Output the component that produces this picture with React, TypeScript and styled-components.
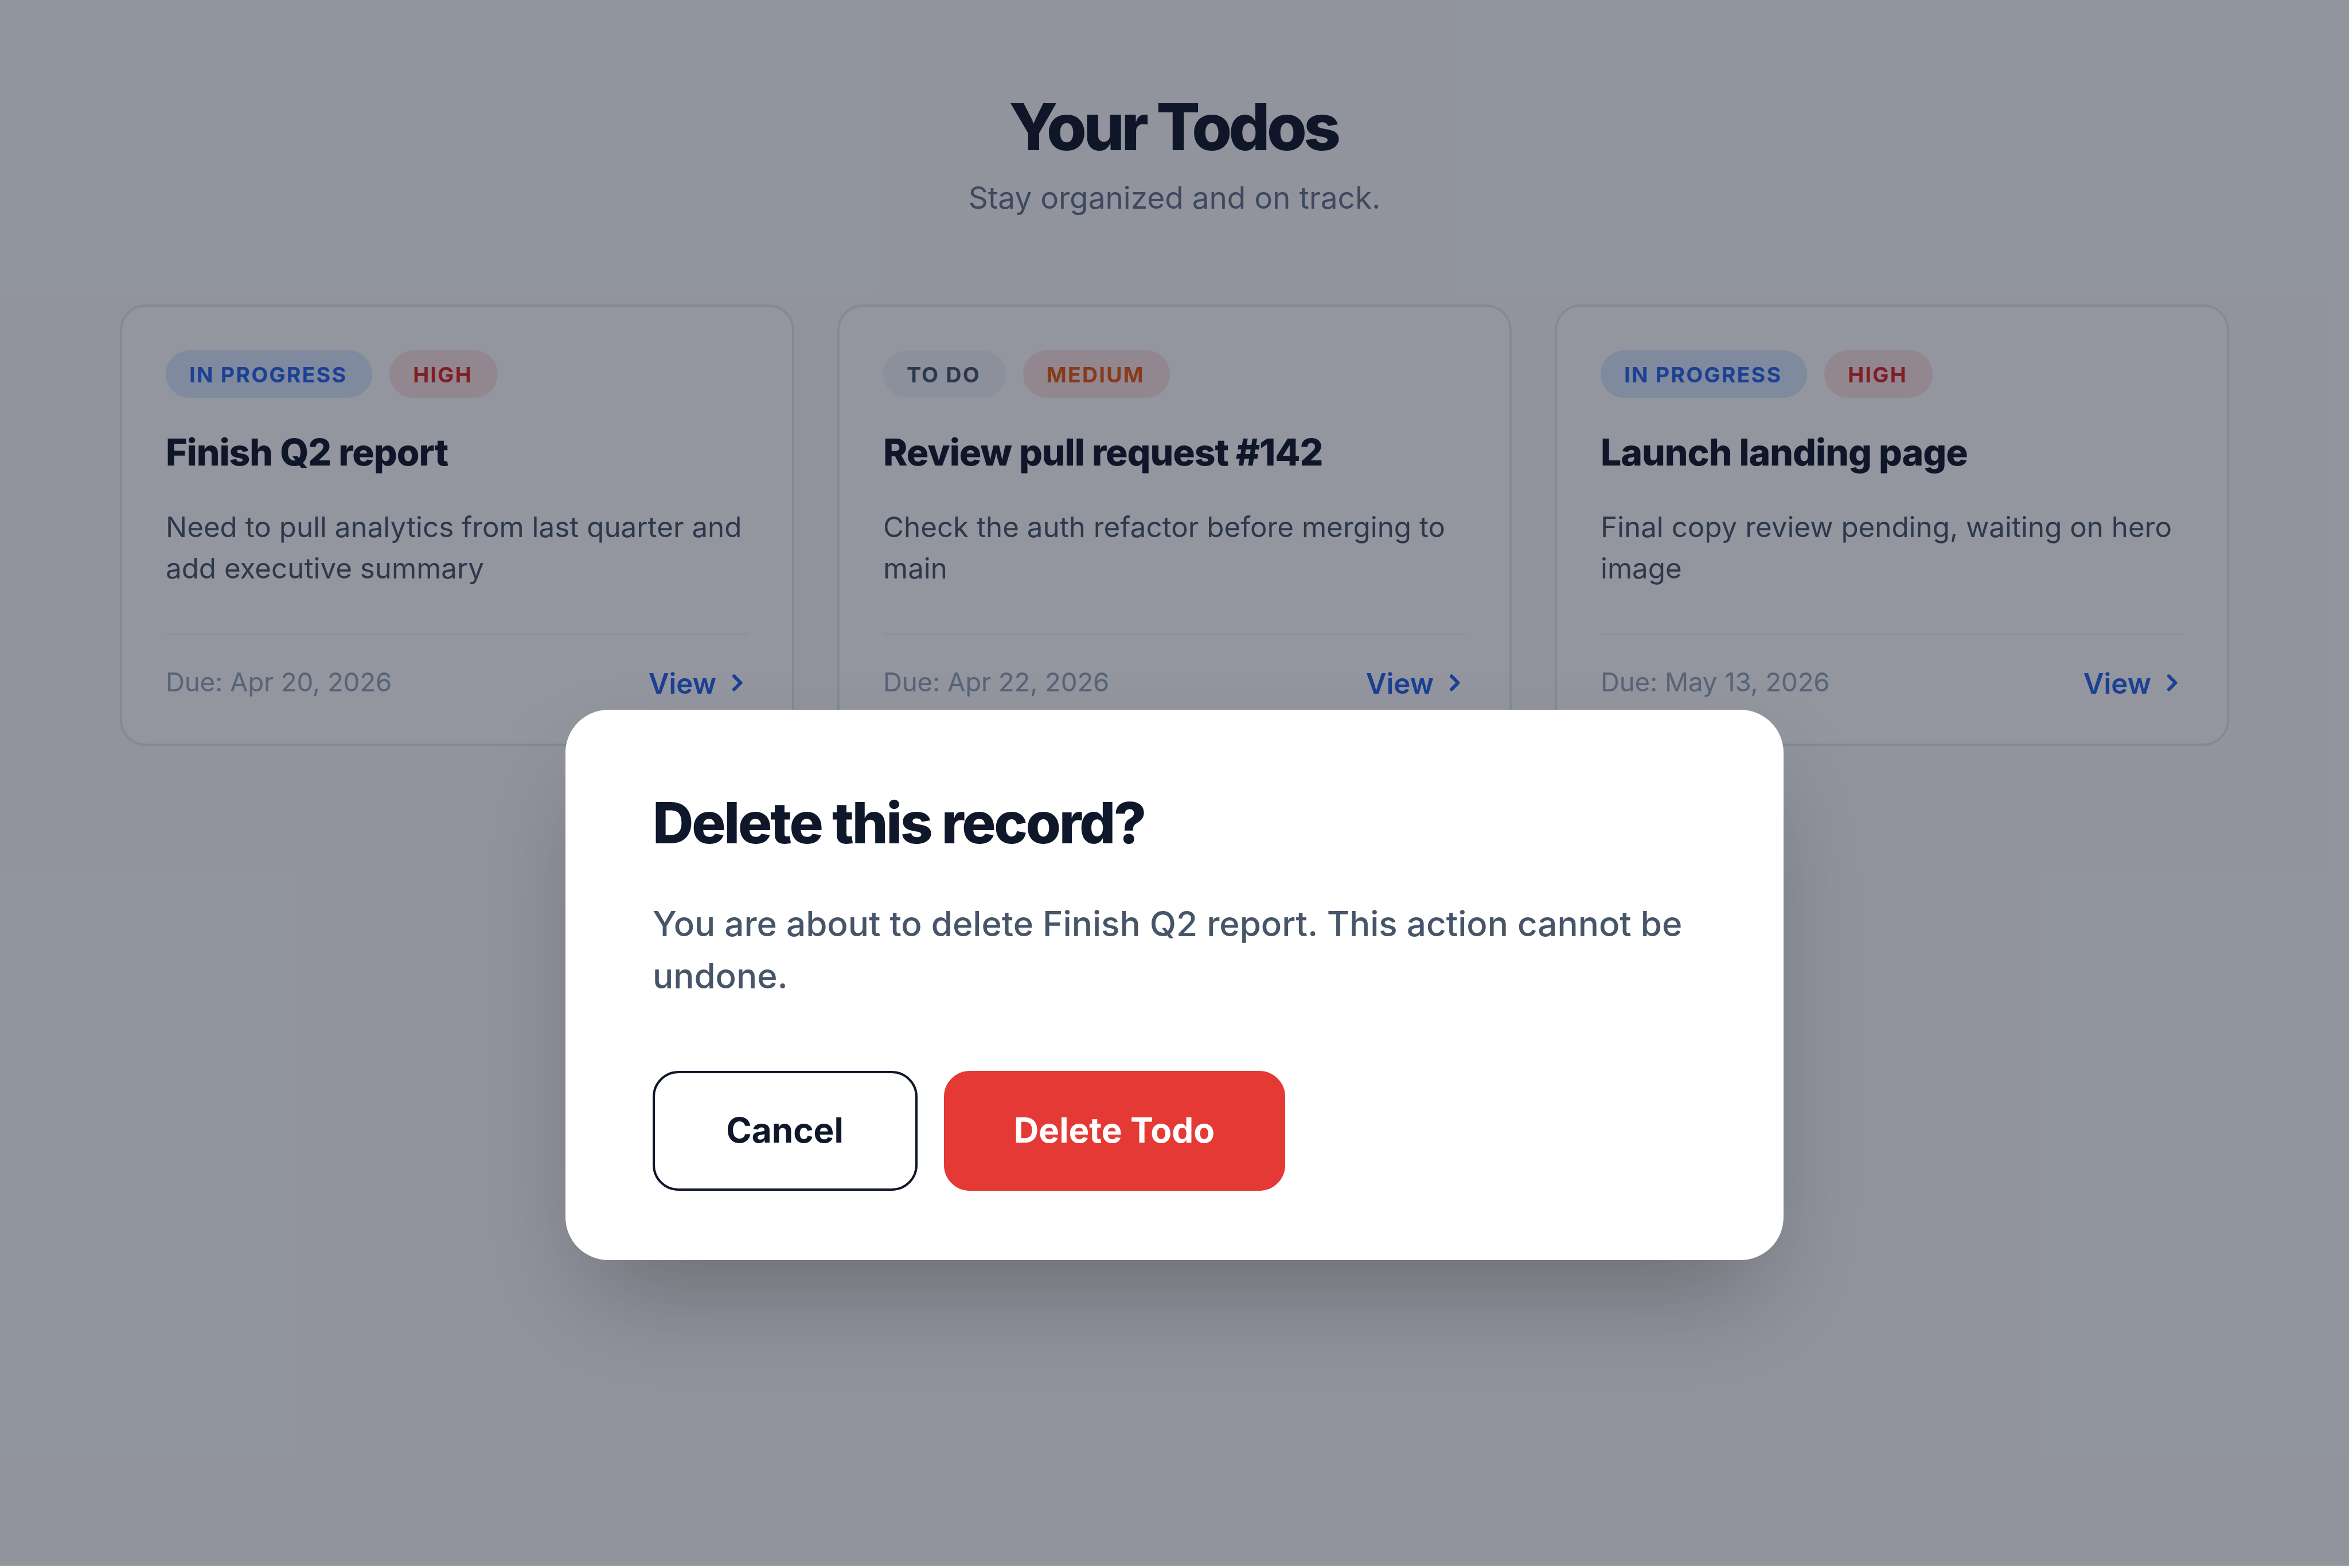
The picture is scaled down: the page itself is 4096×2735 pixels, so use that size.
import styled, { createGlobalStyle } from "styled-components";

const GlobalStyle = createGlobalStyle`
  * {
    box-sizing: border-box;
    margin: 0;
    padding: 0;
  }

  body {
    background: #ffffff;
    font-family: Inter, sans-serif;
    color: #0f172a;
    overflow: hidden;
  }
`;

const StyledPage = styled.main`
  position: relative;
  height: 2731px;
  padding: 150px 209px 0;
  background: #fcfcfc;
`;

const StyledHeader = styled.header`
  display: flex;
  flex-direction: column;
  align-items: center;
  height: 381px;
`;

const StyledHeading = styled.h1`
  padding-right: 4px;
  font-size: 113px;
  line-height: 142px;
  font-weight: 800;
  letter-spacing: -0.05em;
`;

const StyledTagline = styled.p`
  margin-top: 14px;
  font-size: 53.1px;
  line-height: 78px;
  color: #64748b;
`;

const StyledGrid = styled.section`
  display: grid;
  grid-template-columns: repeat(3, 1fr);
  gap: 75px;
`;

const StyledCard = styled.article`
  display: flex;
  flex-direction: column;
  height: 770px;
  padding: 76px;
  border: 4px solid #e2e8f0;
  border-radius: 45px;
  background: #ffffff;
`;

const StyledBadges = styled.div`
  display: flex;
  gap: 30px;
`;

const StyledBadge = styled.span<{ $background: string; $color: string }>`
  height: 83px;
  padding: 0 44px 0 41px;
  border-radius: 42px;
  font-size: 37.5px;
  line-height: 85px;
  font-weight: 700;
  letter-spacing: 0.06em;
  text-transform: uppercase;
  background: ${(props) => props.$background};
  color: ${(props) => props.$color};
`;

const StyledCardTitle = styled.h2`
  margin-top: 53px;
  font-size: 64.2px;
  line-height: 84px;
  font-weight: 800;
  letter-spacing: -0.016em;
`;

const StyledDescription = styled.p`
  margin-top: 52px;
  font-size: 49.3px;
  line-height: 72px;
  color: #475569;
`;

const StyledCardFooter = styled.footer`
  display: flex;
  justify-content: space-between;
  align-items: center;
  margin-top: 77px;
  padding-top: 48px;
  border-top: 3px solid #f1f5f9;
`;

const StyledDueDate = styled.span`
  padding-bottom: 4px;
  font-size: 45.4px;
  line-height: 70px;
  color: #94a3b8;
`;

const StyledViewLink = styled.a`
  display: flex;
  align-items: center;
  gap: 18px;
  font-size: 49.2px;
  line-height: 74px;
  font-weight: 600;
  color: #2563eb;
`;

const StyledOverlay = styled.div`
  position: absolute;
  inset: 0;
  display: flex;
  justify-content: center;
  align-items: flex-start;
  padding-top: 1238px;
  background: rgba(15, 23, 42, 0.45);
`;

const StyledDialog = styled.div`
  width: 2124px;
  height: 960px;
  padding: 137px 152px;
  border-radius: 75px;
  background: #ffffff;
  box-shadow: 0 94px 188px -40px rgba(0, 0, 0, 0.26);
`;

const StyledDialogTitle = styled.h2`
  font-size: 98.8px;
  line-height: 120px;
  font-weight: 800;
  letter-spacing: -0.033em;
`;

const StyledDialogText = styled.p`
  margin-top: 71px;
  font-size: 60.2px;
  line-height: 91px;
  font-weight: 500;
  color: #475569;
`;

const StyledActions = styled.div`
  display: flex;
  gap: 46px;
  margin-top: 120px;
`;

const StyledButton = styled.button<{ $danger?: boolean }>`
  width: ${(props) => (props.$danger ? "595px" : "462px")};
  height: 209px;
  padding: 0 1px 2px 0;
  border: 4px solid ${(props) => (props.$danger ? "#e53935" : "#0f172a")};
  border-radius: 45px;
  background: ${(props) => (props.$danger ? "#e53935" : "#ffffff")};
  color: ${(props) => (props.$danger ? "#ffffff" : "#0f172a")};
  font-family: inherit;
  font-size: 60.2px;
  font-weight: 700;
`;

const badgeColors = {
  "In progress": { background: "#dbeafe", color: "#2563eb" },
  "To do": { background: "#f1f5f9", color: "#475569" },
  High: { background: "#fee2e2", color: "#dc2626" },
  Medium: { background: "#fee2e2", color: "#ea580c" },
};

type BadgeLabel = keyof typeof badgeColors;

type Todo = {
  title: string;
  description: string;
  due: string;
  status: BadgeLabel;
  priority: BadgeLabel;
};

const todos: Todo[] = [
  {
    title: "Finish Q2 report",
    description:
      "Need to pull analytics from last quarter and add executive summary",
    due: "Apr 20, 2026",
    status: "In progress",
    priority: "High",
  },
  {
    title: "Review pull request #142",
    description: "Check the auth refactor before merging to main",
    due: "Apr 22, 2026",
    status: "To do",
    priority: "Medium",
  },
  {
    title: "Launch landing page",
    description: "Final copy review pending, waiting on hero image",
    due: "May 13, 2026",
    status: "In progress",
    priority: "High",
  },
];

function Badge({ label }: { label: BadgeLabel }) {
  const { background, color } = badgeColors[label];
  return (
    <StyledBadge $background={background} $color={color}>
      {label}
    </StyledBadge>
  );
}

function ChevronIcon() {
  return (
    <svg width="38" height="50" viewBox="0 0 38 50" fill="none">
      <path
        d="M13 12.5L24.5 24L13 35.5"
        stroke="currentColor"
        strokeWidth="6"
        strokeLinecap="round"
        strokeLinejoin="round"
      />
    </svg>
  );
}

function TodoCard({ todo }: { todo: Todo }) {
  return (
    <StyledCard>
      <StyledBadges>
        <Badge label={todo.status} />
        <Badge label={todo.priority} />
      </StyledBadges>
      <StyledCardTitle>{todo.title}</StyledCardTitle>
      <StyledDescription>{todo.description}</StyledDescription>
      <StyledCardFooter>
        <StyledDueDate>Due: {todo.due}</StyledDueDate>
        <StyledViewLink>
          View
          <ChevronIcon />
        </StyledViewLink>
      </StyledCardFooter>
    </StyledCard>
  );
}

export default function App() {
  return (
    <>
      <GlobalStyle />
      <StyledPage>
        <StyledHeader>
          <StyledHeading>Your Todos</StyledHeading>
          <StyledTagline>Stay organized and on track.</StyledTagline>
        </StyledHeader>
        <StyledGrid>
          {todos.map((todo) => (
            <TodoCard key={todo.title} todo={todo} />
          ))}
        </StyledGrid>
        <StyledOverlay>
          <StyledDialog role="dialog" aria-modal="true">
            <StyledDialogTitle>Delete this record?</StyledDialogTitle>
            <StyledDialogText>
              You are about to delete Finish Q2 report. This action cannot be
              undone.
            </StyledDialogText>
            <StyledActions>
              <StyledButton>Cancel</StyledButton>
              <StyledButton $danger>Delete Todo</StyledButton>
            </StyledActions>
          </StyledDialog>
        </StyledOverlay>
      </StyledPage>
    </>
  );
}
